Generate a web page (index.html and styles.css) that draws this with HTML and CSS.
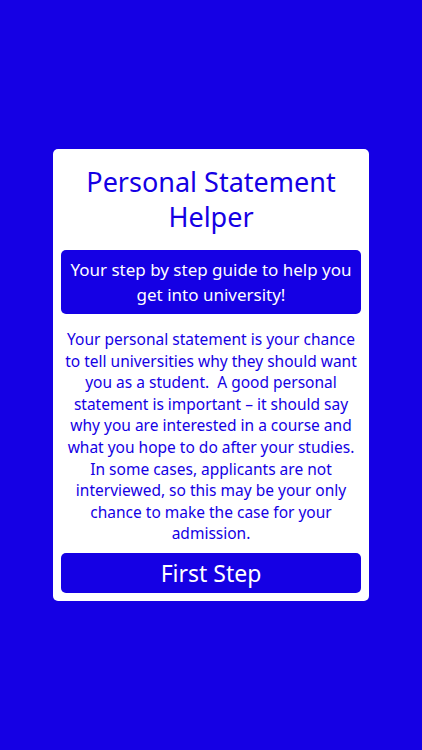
FILE: index.html
```html
<!DOCTYPE html>
<html lang="en">
<head>
    <meta charset="UTF-8">
    <title>Personal Statement Helper</title>
    <link rel="stylesheet" href="styles.css">
</head>
<body>
<div class="screen">
    <div class="card">
        <h1 class="title">Personal Statement Helper</h1>
        <div class="tagline">Your step by step guide to help you get into university!</div>
        <p class="intro">Your personal statement is your chance<br>
            to tell universities why they should want<br>
            you as a student.&nbsp; A good personal<br>
            statement is important &ndash; it should say<br>
            why you are interested in a course and<br>
            what you hope to do after your studies.<br>
            In some cases, applicants are not<br>
            interviewed, so this may be your only<br>
            chance to make the case for your<br>
            admission.</p>
        <a class="btn" href="javascript:void(0)">First Step</a>
    </div>
</div>
</body>
</html>
```

FILE: styles.css
```css
html, body {
    margin: 0;
    padding: 0;
}
body {
    background: #1500e4;
    font-family: "Noto Sans", "DejaVu Sans", sans-serif;
}
.screen {
    width: 422px;
    height: 750px;
    display: flex;
    align-items: center;
    justify-content: center;
}
.card {
    width: 316px;
    box-sizing: border-box;
    background: #fff;
    border-radius: 5px;
    padding: 15px 8px 8px;
    display: flex;
    flex-direction: column;
    align-items: stretch;
    color: #1500e4;
}
.title {
    margin: 0 0 16px;
    font-size: 27px;
    font-weight: 400;
    line-height: 35px;
    text-align: center;
    padding: 0 20px;
}
.tagline {
    background: #1500e4;
    color: #fff;
    border-radius: 5px;
    text-align: center;
    font-size: 17px;
    line-height: 25px;
    padding: 7px 6px;
}
.intro {
    margin: 15px -4px 8px;
    font-size: 15.5px;
    line-height: 21.6px;
    text-align: center;
    white-space: nowrap;
}
.btn {
    display: block;
    background: #1500e4;
    color: #fff;
    border-radius: 5px;
    text-decoration: none;
    text-align: center;
    font-size: 23px;
    line-height: 40px;
}
```
